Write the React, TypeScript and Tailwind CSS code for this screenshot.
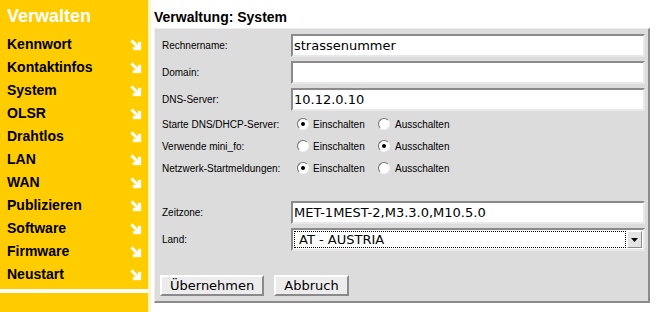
import React from 'react';

const menu = ['Kennwort', 'Kontaktinfos', 'System', 'OLSR', 'Drahtlos', 'LAN', 'WAN', 'Publizieren', 'Software', 'Firmware', 'Neustart'];

function Arrow() {
  return (
    <svg width="12" height="12" viewBox="0 0 12 12" className="shrink-0">
      <polygon points="0.5,2.5 2.5,0.5 8,6 8,3 11,3 11,11 3,11 3,8 6,8" fill="#ffffff" stroke="#fff3b0" strokeWidth="0.5" />
    </svg>
  );
}

function Radio({ checked }: { checked?: boolean }) {
  return (
    <span className="w-[12px] h-[12px] rounded-full bg-white border border-t-[#707070] border-l-[#707070] border-r-[#f4f4f4] border-b-[#f4f4f4] flex items-center justify-center shrink-0">
      {checked && <span className="w-[4px] h-[4px] rounded-full bg-black" />}
    </span>
  );
}

function TextInput({ value }: { value: string }) {
  return (
    <div className="w-[354px] h-[23px] bg-white border-2 border-t-[#8a8a8a] border-l-[#8a8a8a] border-r-[#e8e8e8] border-b-[#e8e8e8] flex items-center pl-[1px] text-[13px] text-black font-['DejaVu_Sans',sans-serif]">
      {value}
    </div>
  );
}

function RadioRow({ label, first }: { label: string; first: boolean }) {
  return (
    <div className="h-[22px] flex items-center">
      <div className="w-[129px]">{label}</div>
      <div className="flex items-center pl-[6px]">
        <Radio checked={first} />
        <span className="ml-[4px] w-[65px]">Einschalten</span>
        <Radio checked={!first} />
        <span className="ml-[5px]">Ausschalten</span>
      </div>
    </div>
  );
}

function Row({ label, children, className }: { label: string; children: React.ReactNode; className?: string }) {
  return (
    <div className={`flex items-start ${className ?? ''}`}>
      <div className="w-[129px] h-[23px] flex items-center">{label}</div>
      {children}
    </div>
  );
}

export default function App() {
  return (
    <div className="w-[657px] h-[312px] flex bg-white overflow-hidden">
      <div className="w-[151px] h-full bg-[#ffcc00] border-r-[3px] border-[#fff4c4] flex flex-col font-['Liberation_Sans',Arial,sans-serif] font-bold">
        <div className="h-[33px] pl-[7px] pt-[5px] text-[18px] leading-[22px] text-white">Verwalten</div>
        {menu.map(item => (
          <div key={item} className="h-[23px] flex items-center justify-between pl-[7px] pr-[6px] text-[14px] text-black">
            <span>{item}</span>
            <Arrow />
          </div>
        ))}
        <div className="h-[3px]" />
        <div className="h-[4px] bg-white" />
      </div>

      <div className="flex-1 pl-[3px] pr-[7px]">
        <div className="h-[28px] pt-[8px] text-[14px] leading-[18px] font-bold text-black font-['Liberation_Sans',Arial,sans-serif]">Verwaltung: System</div>
        <div className="h-[275px] bg-[#dcdcdc] border-t border-l border-t-[#eeeeee] border-l-[#eeeeee] border-r-2 border-b-2 border-r-[#8c8c8c] border-b-[#8c8c8c] pl-[7px] pt-[5px] text-[10px] text-black font-['Liberation_Sans',Arial,sans-serif]">
          <Row label="Rechnername:" className="h-[27px]"><TextInput value="strassenummer" /></Row>
          <Row label="Domain:" className="h-[27px]"><TextInput value="" /></Row>
          <Row label="DNS-Server:" className="h-[25px]"><TextInput value="10.12.0.10" /></Row>
          <RadioRow label="Starte DNS/DHCP-Server:" first />
          <RadioRow label="Verwende mini_fo:" first={false} />
          <RadioRow label="Netzwerk-Startmeldungen:" first />
          <div className="h-[22px]" />
          <Row label="Zeitzone:" className="h-[27px]"><TextInput value="MET-1MEST-2,M3.3.0,M10.5.0" /></Row>
          <Row label="Land:" className="h-[23px]">
            <div className="w-[354px] h-[23px] bg-white border-2 border-t-[#8a8a8a] border-l-[#8a8a8a] border-r-[#e8e8e8] border-b-[#e8e8e8] flex items-center p-[1px] font-['DejaVu_Sans',sans-serif] text-[13px]">
              <div className="flex-1 h-full border border-dotted border-black flex items-center pl-[4px]">AT - AUSTRIA</div>
              <div className="w-[15px] h-[17px] ml-[1px] bg-[#e4e4e4] border border-t-white border-l-white border-r-[#8a8a8a] border-b-[#8a8a8a] flex items-center justify-center">
                <svg width="7" height="4" viewBox="0 0 7 4"><polygon points="0,0 7,0 3.5,4" fill="#000" /></svg>
              </div>
            </div>
          </Row>
          <div className="flex gap-[10px] mt-[24px] -ml-[2px] font-['DejaVu_Sans',sans-serif] text-[13px]">
            <div className="h-[21px] px-[8px] bg-[#ececec] border-2 border-t-white border-l-white border-r-[#8a8a8a] border-b-[#8a8a8a] flex items-center">Übernehmen</div>
            <div className="h-[21px] px-[8px] bg-[#ececec] border-2 border-t-white border-l-white border-r-[#8a8a8a] border-b-[#8a8a8a] flex items-center">Abbruch</div>
          </div>
        </div>
      </div>
    </div>
  );
}
